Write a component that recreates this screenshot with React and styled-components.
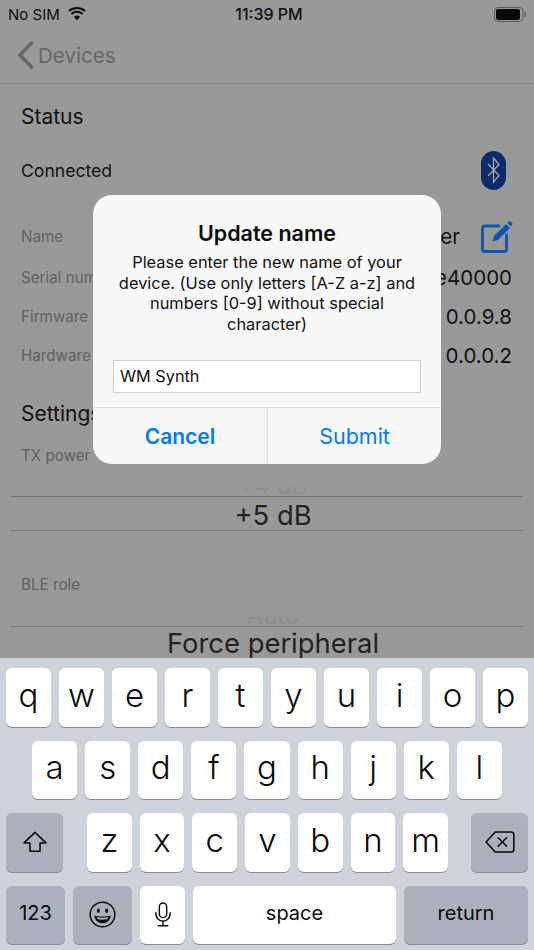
import React from "react";
import styled, { createGlobalStyle } from "styled-components";

const Global = createGlobalStyle`
  html, body { margin: 0; padding: 0; background: #999; }
  * { box-sizing: border-box; }
`;

const Screen = styled.div`
  position: relative;
  width: 534px;
  height: 950px;
  overflow: hidden;
  display: flex;
  flex-direction: column;
  background: #999;
  font-family: Inter, "Liberation Sans", sans-serif;
  color: #111;
`;

const Main = styled.div`
  flex: 1;
  min-height: 0;
  overflow: hidden;
`;

const StatusBar = styled.div`
  height: 28px;
  display: grid;
  grid-template-columns: 1fr auto 1fr;
  align-items: center;
  padding: 0 8px;
  font-size: 15px;
  color: #0e0e0e;
`;

const StatusLeft = styled.div`
  display: flex;
  align-items: center;
  gap: 8px;
`;

const Clock = styled.div`
  font-size: 16px;
  font-weight: 500;
  padding-left: 4px;
`;

const StatusRight = styled.div`
  display: flex;
  justify-content: flex-end;
`;

const NavBar = styled.div`
  height: 56px;
  display: flex;
  align-items: center;
  gap: 4px;
  padding: 0 0 1px 17px;
  border-bottom: 1px solid #858585;
  color: #666;
  font-size: 20.6px;
`;

const Content = styled.div`
  padding: 18px 22px 0 21px;
`;

const Heading = styled.div`
  height: 30px;
  line-height: 30px;
  font-size: 21px;
  margin-top: ${(p) => p.$top || 0}px;
`;

const ConnectedRow = styled.div`
  height: 40px;
  margin-top: 18px;
  margin-right: 6px;
  display: flex;
  align-items: center;
  justify-content: space-between;
  font-size: 17.6px;
`;

const BtPill = styled.div`
  width: 25px;
  height: 39px;
  border-radius: 12.5px;
  background: #0b2c69;
  display: flex;
  align-items: center;
  justify-content: center;
`;

const InfoRow = styled.div`
  height: 39px;
  display: flex;
  align-items: center;
  justify-content: space-between;
  margin-bottom: ${(p) => p.$after || 0}px;
`;

const Label = styled.div`
  font-size: 15.2px;
  color: #5f5f5f;
`;

const Value = styled.div`
  display: flex;
  align-items: center;
  gap: 21px;
  font-size: 20.5px;
  color: #111;
`;

const EditSlot = styled.div`
  display: flex;
  margin-right: -1px;
`;

const NameBlock = styled.div`
  margin-top: 27px;
`;

const PickerLabel = styled(Label)`
  height: 20px;
  line-height: 20px;
  margin-top: ${(p) => p.$top}px;
`;

const Picker = styled.div`
  margin: ${(p) => p.$top}px -11px 0 -10px;
  text-align: center;
`;

const GhostRow = styled.div`
  height: 9px;
  overflow: hidden;
  display: flex;
  align-items: flex-end;
  justify-content: center;
  padding-left: 12px;
  font-size: 24px;
  line-height: 20px;
  color: #8e8e8e;
`;

const PickerRow = styled.div`
  height: ${(p) => (p.$open ? 33 : 35)}px;
  line-height: ${(p) => (p.$open ? 33 : 36)}px;
  padding-left: 12px;
  border-top: 1px solid #717171;
  border-bottom: ${(p) => (p.$open ? "none" : "1px solid #717171")};
  font-size: 27.4px;
  color: #222;
`;

const Dialog = styled.div`
  position: absolute;
  left: 93px;
  top: 195px;
  width: 348px;
  height: 269px;
  border-radius: 19px;
  overflow: hidden;
  background: #f8f8f8;
  display: flex;
  flex-direction: column;
  text-align: center;
`;

const DialogBody = styled.div`
  flex: 1;
  padding: 25px 20px 0;
`;

const DialogTitle = styled.div`
  font-size: 21.5px;
  line-height: 27px;
  font-weight: 600;
  color: #0a0a0a;
`;

const DialogText = styled.div`
  margin-top: 5px;
  font-size: 16.4px;
  line-height: 20.7px;
  color: #111;
`;

const NameInput = styled.div`
  margin-top: 25px;
  height: 33px;
  line-height: 30px;
  padding-left: 6px;
  text-align: left;
  background: #fff;
  border: 1px solid #cfcfcf;
  font-size: 16.3px;
  color: #111;
`;

const DialogActions = styled.div`
  height: 57px;
  display: grid;
  grid-template-columns: 174px 1fr;
  border-top: 1px solid #e2e2e2;
`;

const DialogButton = styled.div`
  display: flex;
  align-items: center;
  justify-content: center;
  font-size: ${(p) => (p.$strong ? 21 : 21.5)}px;
  color: #007aff;
  font-weight: ${(p) => (p.$strong ? 600 : 400)};
  & + & {
    border-left: 1px solid #e2e2e2;
  }
`;

const Keyboard = styled.div`
  height: 292px;
  flex: none;
  background: #ced2d9;
  padding-top: 10px;
  display: flex;
  flex-direction: column;
  gap: 14px;
`;

const KeyRow = styled.div`
  display: flex;
  gap: 8px;
  padding: 0 ${(p) => p.$inset || 6}px;
`;

const Key = styled.div`
  flex: ${(p) => (p.$w ? `0 0 ${p.$w}px` : "1 1 0")};
  height: 58.5px;
  margin-left: ${(p) => p.$gap || 0}px;
  border-radius: 6px;
  display: flex;
  align-items: center;
  justify-content: center;
  background: ${(p) => (p.$dark ? "#abb0bb" : "#fff")};
  box-shadow: 0 1px 0 #888b91;
  color: #0a0a0a;
  font-size: ${(p) => (p.$small ? 20 : 33)}px;
  font-weight: ${(p) => (p.$small ? 400 : 300)};
  padding-bottom: ${(p) => (p.$icon ? 0 : p.$small ? 3 : 5)}px;
`;

const Wifi = () => (
  <svg width="18" height="14" viewBox="0 0 18 14">
    <path d="M9 13.5 L5.9 9.8 A4.8 4.8 0 0 1 12.1 9.8 Z" fill="#0e0e0e" />
    <path d="M3.4 6.9 A8.4 8.4 0 0 1 14.6 6.9" fill="none" stroke="#0e0e0e" strokeWidth="2" />
    <path d="M1 4.1 A12 12 0 0 1 17 4.1" fill="none" stroke="#0e0e0e" strokeWidth="2" />
  </svg>
);

const Battery = () => (
  <svg width="32" height="15" viewBox="0 0 32 15">
    <rect x="0.5" y="0.5" width="28.5" height="14" rx="3.5" fill="none" stroke="#5c5c5c" />
    <rect x="2" y="2" width="24" height="11" rx="2" fill="#0a0a0a" />
    <path d="M30.5 5 a2 2.5 0 0 1 0 5 z" fill="#5c5c5c" />
  </svg>
);

const Chevron = () => (
  <svg width="17" height="28" viewBox="0 0 17 28">
    <path d="M14.5 2 L3 14 L14.5 26" fill="none" stroke="#666" strokeWidth="3.6" strokeLinecap="round" strokeLinejoin="round" />
  </svg>
);

const Bluetooth = () => (
  <svg width="16" height="30" viewBox="0 0 16 30">
    <path d="M2 9 L13 20.5 L7.5 27 L7.5 3 L13 9.5 L2 21" fill="none" stroke="#a8a8a8" strokeWidth="1.3" />
  </svg>
);

const EditIcon = () => (
  <svg width="32" height="33" viewBox="0 0 32 33">
    <path d="M18 6 H3.5 A2 2 0 0 0 1.5 8 V29.5 A2 2 0 0 0 3.5 31.5 H23.5 A2 2 0 0 0 25.5 29.5 V15" fill="none" stroke="#0b57ad" strokeWidth="2.8" strokeLinecap="round" />
    <path d="M11.5 21.5 L13 16 L25 4 L29 8 L17 20 Z" fill="#0b57ad" />
    <path d="M26.2 2.8 L27.6 1.4 A1.5 1.5 0 0 1 29.7 1.4 L31 2.7 A1.5 1.5 0 0 1 31 4.8 L30 6.6 Z" fill="#0b57ad" />
  </svg>
);

const ShiftIcon = () => (
  <svg width="26" height="22" viewBox="0 0 27 24">
    <path d="M13.5 1.5 L25.5 13 H19 V22 H8 V13 H1.5 Z" fill="none" stroke="#0a0a0a" strokeWidth="1.7" strokeLinejoin="round" />
  </svg>
);

const DeleteIcon = () => (
  <svg width="30" height="22" viewBox="0 0 31 23">
    <path d="M10.5 1 H27 A3 3 0 0 1 30 4 V19 A3 3 0 0 1 27 22 H10.5 L1 11.5 Z" fill="none" stroke="#0a0a0a" strokeWidth="1.6" strokeLinejoin="round" />
    <path d="M13.5 7 L22.5 16 M22.5 7 L13.5 16" fill="none" stroke="#0a0a0a" strokeWidth="1.6" strokeLinecap="round" />
  </svg>
);

const EmojiIcon = () => (
  <svg width="27" height="27" viewBox="0 0 28 28">
    <circle cx="14" cy="14" r="12.8" fill="none" stroke="#0a0a0a" strokeWidth="1.5" />
    <ellipse cx="9.7" cy="10" rx="1.6" ry="2.3" fill="#0a0a0a" />
    <ellipse cx="18.3" cy="10" rx="1.6" ry="2.3" fill="#0a0a0a" />
    <path d="M5.5 15 C10 16.5 18 16.5 22.5 15 C22 20 18.5 23 14 23 C9.5 23 6 20 5.5 15 Z" fill="#0a0a0a" />
    <path d="M8 16.6 C11.5 17.5 16.5 17.5 20 16.6 C19.6 18 19.3 18.6 18.8 19 C15.5 19.5 12.5 19.5 9.2 19 C8.7 18.6 8.4 18 8 16.6 Z" fill="#abb0bb" />
  </svg>
);

const MicIcon = () => (
  <svg width="16" height="25" viewBox="0 0 17 26">
    <rect x="4.6" y="0.8" width="7.8" height="15.5" rx="3.9" fill="none" stroke="#0a0a0a" strokeWidth="1.5" />
    <path d="M1 11 V12.5 A7.5 7.5 0 0 0 16 12.5 V11" fill="none" stroke="#0a0a0a" strokeWidth="1.5" strokeLinecap="round" />
    <path d="M8.5 20 V25 M3.5 25 H13.5" fill="none" stroke="#0a0a0a" strokeWidth="1.5" strokeLinecap="round" />
  </svg>
);

const letterRow = (letters) => letters.split("").map((l) => <Key key={l}>{l}</Key>);

export default function App() {
  return (
    <Screen>
      <Global />
      <Main>
        <StatusBar>
          <StatusLeft>
            <span>No SIM</span>
            <Wifi />
          </StatusLeft>
          <Clock>11:39 PM</Clock>
          <StatusRight>
            <Battery />
          </StatusRight>
        </StatusBar>
        <NavBar>
          <Chevron />
          <span>Devices</span>
        </NavBar>
        <Content>
          <Heading>Status</Heading>
          <ConnectedRow>
            <span>Connected</span>
            <BtPill>
              <Bluetooth />
            </BtPill>
          </ConnectedRow>
          <NameBlock>
            <InfoRow $after={2}>
              <Label>Name</Label>
              <Value>
                <span>Wave Maker</span>
                <EditSlot>
                  <EditIcon />
                </EditSlot>
              </Value>
            </InfoRow>
            <InfoRow>
              <Label>Serial number</Label>
              <Value>8c5e40000</Value>
            </InfoRow>
            <InfoRow>
              <Label>Firmware version</Label>
              <Value>0.0.9.8</Value>
            </InfoRow>
            <InfoRow>
              <Label>Hardware version</Label>
              <Value>0.0.0.2</Value>
            </InfoRow>
          </NameBlock>
          <Heading $top={24}>Settings</Heading>
          <PickerLabel $top={17}>TX power</PickerLabel>
          <Picker $top={21}>
            <GhostRow>+4 dB</GhostRow>
            <PickerRow>+5 dB</PickerRow>
          </Picker>
          <PickerLabel $top={44}>BLE role</PickerLabel>
          <Picker $top={22}>
            <GhostRow>Auto</GhostRow>
            <PickerRow $open>Force peripheral</PickerRow>
          </Picker>
        </Content>
      </Main>

      <Dialog>
        <DialogBody>
          <DialogTitle>Update name</DialogTitle>
          <DialogText>
            Please enter the new name of your device. (Use only letters [A-Z a-z] and numbers [0-9] without special character)
          </DialogText>
          <NameInput>WM Synth</NameInput>
        </DialogBody>
        <DialogActions>
          <DialogButton $strong>Cancel</DialogButton>
          <DialogButton>Submit</DialogButton>
        </DialogActions>
      </Dialog>

      <Keyboard>
        <KeyRow>{letterRow("qwertyuiop")}</KeyRow>
        <KeyRow $inset={32}>{letterRow("asdfghjkl")}</KeyRow>
        <KeyRow>
          <Key $dark $icon $w={57}>
            <ShiftIcon />
          </Key>
          <Key $gap={16}>z</Key>
          {letterRow("xcvbnm")}
          <Key $dark $icon $w={57} $gap={15}>
            <DeleteIcon />
          </Key>
        </KeyRow>
        <KeyRow>
          <Key $dark $small $w={59}>123</Key>
          <Key $dark $small $icon $w={59}>
            <EmojiIcon />
          </Key>
          <Key $small $icon $w={45}>
            <MicIcon />
          </Key>
          <Key $small $w={203}>space</Key>
          <Key $dark $small $w={124}>return</Key>
        </KeyRow>
      </Keyboard>
    </Screen>
  );
}
